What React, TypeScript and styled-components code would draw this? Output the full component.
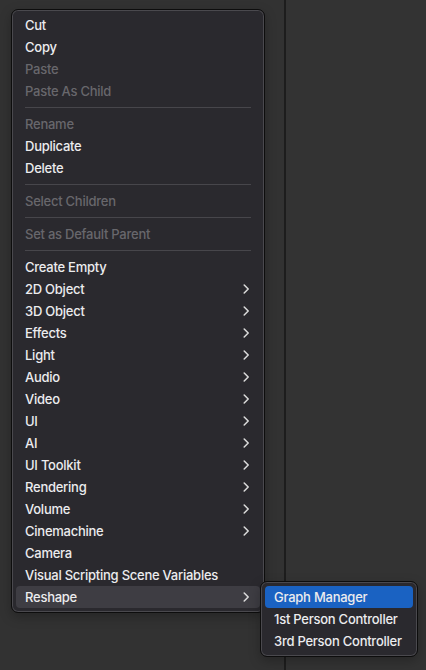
import React from "react";
import styled, { createGlobalStyle } from "styled-components";

const Global = createGlobalStyle`
  html, body { margin: 0; padding: 0; }
  body {
    background: #323232;
    font-family: Inter, "Noto Sans", "Liberation Sans", sans-serif;
    -webkit-font-smoothing: antialiased;
  }
`;

const Page = styled.div`
  position: relative;
  width: 426px;
  height: 670px;
  overflow: hidden;
  display: flex;
`;

const LeftPane = styled.div`
  width: 284px;
  height: 100%;
  background: #323232;
  border-right: 2px solid #1d1d1d;
`;

const RightPane = styled.div`
  flex: 1;
  height: 100%;
  background: #333333;
`;

const Menu = styled.div<{ $left: number; $top: number; $width: number }>`
  position: absolute;
  left: ${(p) => p.$left}px;
  top: ${(p) => p.$top}px;
  width: ${(p) => p.$width}px;
  box-sizing: border-box;
  padding: 4px;
  background: #2a292e;
  border: 1px solid #0d0d0d;
  border-radius: 7px;
  box-shadow: inset 0 0 0 1px #4a494e, 0 4px 12px rgba(0, 0, 0, 0.25);
  display: flex;
  flex-direction: column;
`;

const Item = styled.div<{ $disabled?: boolean; $active?: "gray" | "blue" }>`
  height: 22px;
  display: flex;
  align-items: center;
  justify-content: space-between;
  padding: 0 10px 0 9px;
  border-radius: 4px;
  font-size: 13px;
  font-weight: 500;
  letter-spacing: -0.25px;
  color: ${(p) => (p.$disabled ? "#68676c" : "#ececee")};
  background: ${(p) =>
    p.$active === "gray" ? "#3e3d43" : p.$active === "blue" ? "#1a62c2" : "transparent"};
  white-space: nowrap;
`;

const Separator = styled.div`
  height: 11px;
  display: flex;
  align-items: center;
  padding: 0 9px;
  &::before {
    content: "";
    flex: 1;
    height: 1px;
    background: #47464b;
  }
`;

const Chevron = () => (
  <svg width="7" height="10" viewBox="0 0 7 10" fill="none">
    <path d="M1.2 1 L5.2 5 L1.2 9" stroke="#dcdcdc" strokeWidth="1.5" strokeLinecap="round" strokeLinejoin="round" />
  </svg>
);

type Entry =
  | { sep: true }
  | { label: string; disabled?: boolean; sub?: boolean; active?: "gray" | "blue" };

const main: Entry[] = [
  { label: "Cut" },
  { label: "Copy" },
  { label: "Paste", disabled: true },
  { label: "Paste As Child", disabled: true },
  { sep: true },
  { label: "Rename", disabled: true },
  { label: "Duplicate" },
  { label: "Delete" },
  { sep: true },
  { label: "Select Children", disabled: true },
  { sep: true },
  { label: "Set as Default Parent", disabled: true },
  { sep: true },
  { label: "Create Empty" },
  { label: "2D Object", sub: true },
  { label: "3D Object", sub: true },
  { label: "Effects", sub: true },
  { label: "Light", sub: true },
  { label: "Audio", sub: true },
  { label: "Video", sub: true },
  { label: "UI", sub: true },
  { label: "AI", sub: true },
  { label: "UI Toolkit", sub: true },
  { label: "Rendering", sub: true },
  { label: "Volume", sub: true },
  { label: "Cinemachine", sub: true },
  { label: "Camera" },
  { label: "Visual Scripting Scene Variables" },
  { label: "Reshape", sub: true, active: "gray" },
];

const submenu: Entry[] = [
  { label: "Graph Manager", active: "blue" },
  { label: "1st Person Controller" },
  { label: "3rd Person Controller" },
];

const renderEntries = (entries: Entry[]) =>
  entries.map((e, i) =>
    "sep" in e ? (
      <Separator key={i} />
    ) : (
      <Item key={i} $disabled={e.disabled} $active={e.active}>
        <span>{e.label}</span>
        {e.sub && <Chevron />}
      </Item>
    )
  );

export default function App() {
  return (
    <>
      <Global />
      <Page>
        <LeftPane />
        <RightPane />
        <Menu $left={11} $top={9} $width={254}>
          {renderEntries(main)}
        </Menu>
        <Menu $left={260} $top={581} $width={158}>
          {renderEntries(submenu)}
        </Menu>
      </Page>
    </>
  );
}
